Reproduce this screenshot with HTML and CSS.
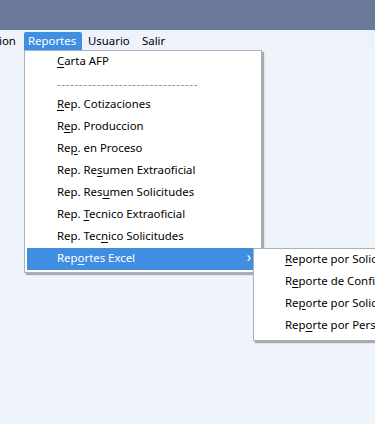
FILE: index.html
```html
<!DOCTYPE html>
<html>
<head>
<meta charset="utf-8">
<link rel="stylesheet" href="styles.css">
</head>
<body>
<div class="titlebar"></div>
<div class="menubar">
  <span class="mb-item first">ion</span>
  <span class="mb-item active">Reportes</span>
  <span class="mb-item user">Usuario</span>
  <span class="mb-item">Salir</span>
</div>
<div class="workspace"></div>

<div class="dropdown">
  <div class="mi"><u>C</u>arta AFP</div>
  <div class="mi sep">--------------------------------</div>
  <div class="mi"><u>R</u>ep. Cotizaciones</div>
  <div class="mi">R<u>e</u>p. Produccion</div>
  <div class="mi">Re<u>p</u>. en Proceso</div>
  <div class="mi">Rep. Re<u>s</u>umen Extraoficial</div>
  <div class="mi">Rep. Res<u>u</u>men Solicitudes</div>
  <div class="mi">Rep. <u>T</u>ecnico Extraoficial</div>
  <div class="mi">Rep. Tec<u>n</u>ico Solicitudes</div>
  <div class="mi hl">Rep<u>o</u>rtes Excel<span class="arrow">&#8250;</span></div>
</div>

<div class="submenu">
  <div class="mi"><u>R</u>eporte por Solicitud</div>
  <div class="mi">R<u>e</u>porte de Confirmacion</div>
  <div class="mi">Re<u>p</u>orte por Solicitante</div>
  <div class="mi">Rep<u>o</u>rte por Persona</div>
</div>
</body>
</html>
```

FILE: styles.css
```css
html, body {
  margin: 0;
  padding: 0;
}
body {
  width: 375px;
  height: 424px;
  overflow: hidden;
  position: relative;
  background: #eff3fa;
  font-family: "Noto Sans", "Open Sans", sans-serif;
  font-size: 11.4px;
  color: #000;
}
.titlebar {
  height: 30px;
  background: #6b7a98;
}
.menubar {
  height: 20px;
  display: flex;
  align-items: center;
  background: #eef2fa;
}
.mb-item {
  box-sizing: border-box;
  height: 18px;
  line-height: 17px;
  margin-top: 1px;
  white-space: nowrap;
}
.mb-item.first {
  width: 25px;
  margin-left: -1px;
  padding-left: 0;
}
.mb-item.active {
  width: 58px;
  padding-left: 4px;
  background: #3f8ee2;
  color: #fff;
  border-radius: 2px 2px 0 0;
}
.mb-item.user {
  width: 54px;
  margin-left: 6px;
}
.workspace {
  height: 374px;
}
.dropdown {
  position: absolute;
  left: 24px;
  top: 50px;
  width: 234px;
  padding: 0 0 2px 2px;
  background: #fff;
  border: 1px solid #a9b1bd;
  box-shadow: 2px 2px 1px rgba(80, 80, 80, 0.45);
}
.mi {
  position: relative;
  height: 22px;
  line-height: 20px;
  padding-left: 30px;
  white-space: nowrap;
}
.mi u {
  text-underline-offset: 2px;
}
.mi.sep {
  height: 21px;
  color: #8c8c8c;
  letter-spacing: 0.75px;
  line-height: 22px;
}
.mi.hl {
  background: #3f8ee2;
  color: #fff;
}
.arrow {
  position: absolute;
  right: 10px;
  top: -1px;
  font-size: 14px;
}
.submenu {
  position: absolute;
  left: 253px;
  top: 248px;
  width: 140px;
  padding: 0 0 3px 0;
  background: #fff;
  border: 1px solid #a9b1bd;
  box-shadow: 2px 2px 1px rgba(80, 80, 80, 0.45);
}
.submenu .mi {
  padding-left: 31px;
}
```
